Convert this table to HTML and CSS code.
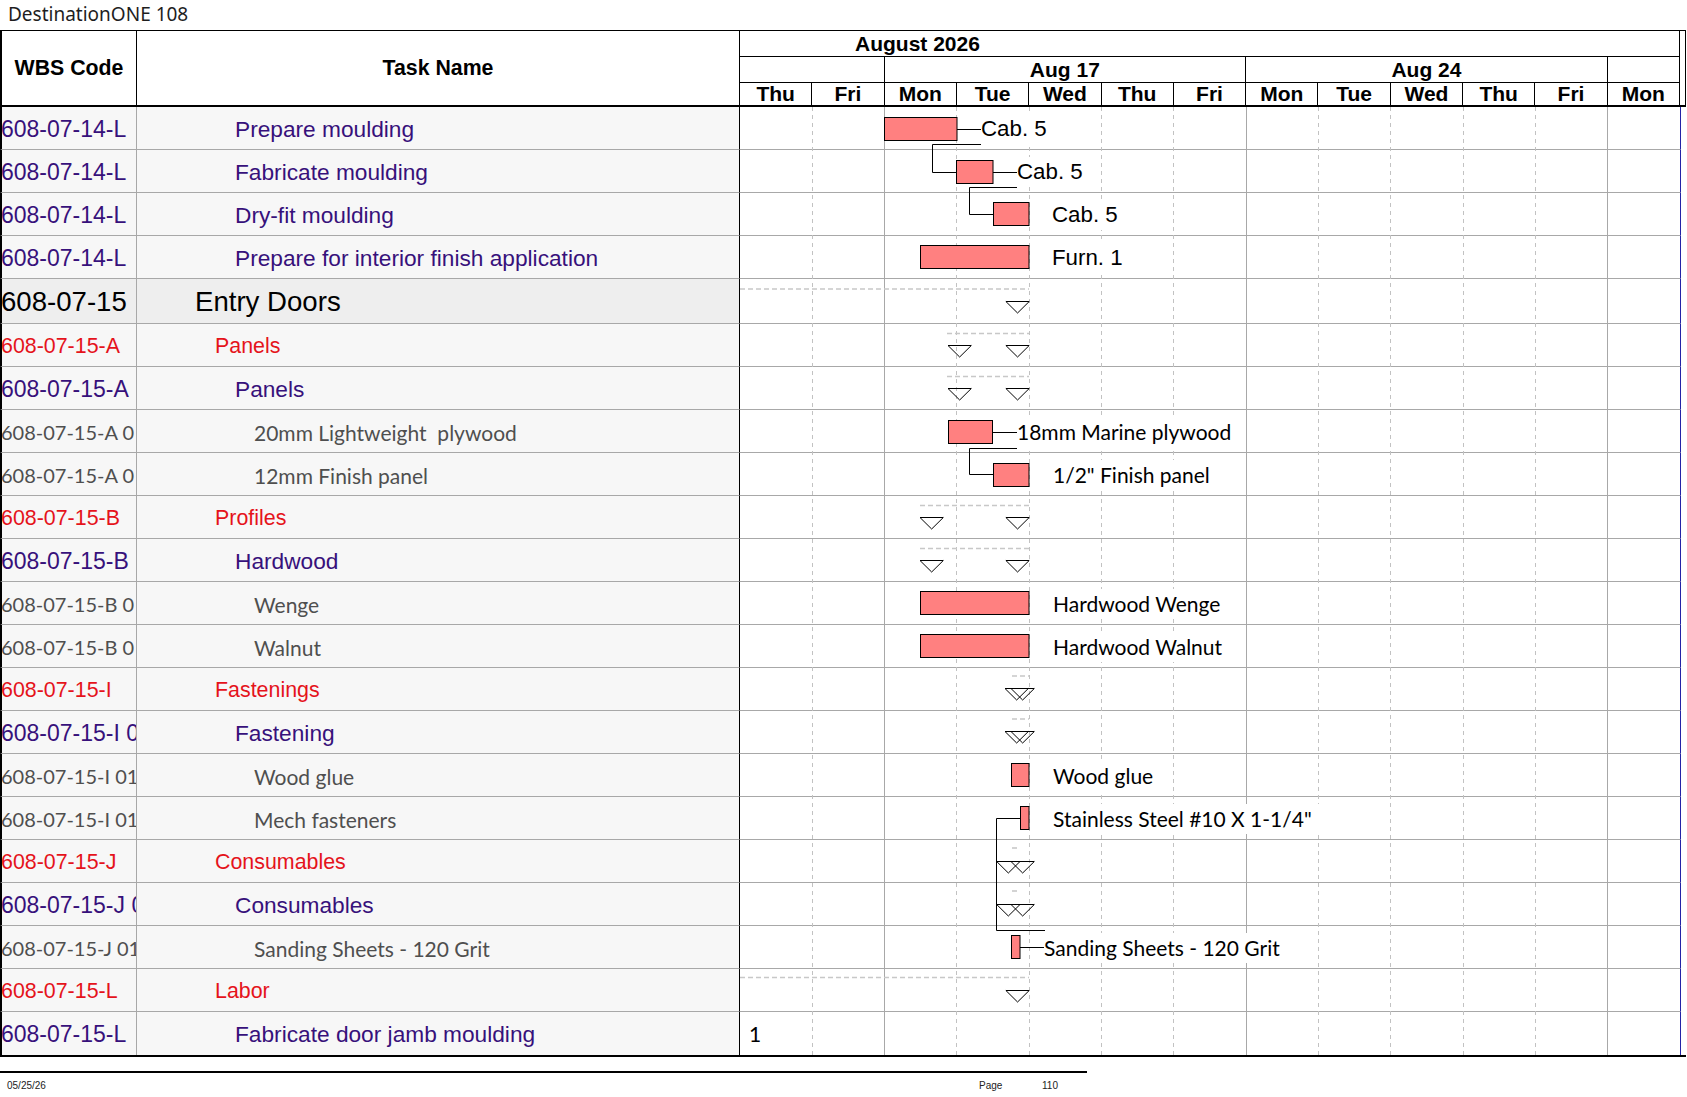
FILE: index.html
```html
<!DOCTYPE html>
<html lang="en">
<head>
<meta charset="utf-8">
<title>DestinationONE 108</title>
<link rel="stylesheet" href="styles.css">
</head>
<body>
<div class="doc-title">DestinationONE 108</div>
<div class="sheet">
  <div class="head">
    <div class="h-wbs">WBS Code</div>
    <div class="h-task">Task Name</div>
    <div class="h-scale">
      <div class="t-month"><span>August 2026</span></div>
      <div class="t-week"><div></div><div>Aug 17</div><div>Aug 24</div><div></div></div>
      <div class="t-day">
        <div>Thu</div><div>Fri</div><div>Mon</div><div>Tue</div><div>Wed</div><div>Thu</div><div>Fri</div>
        <div>Mon</div><div>Tue</div><div>Wed</div><div>Thu</div><div>Fri</div><div>Mon</div>
      </div>
    </div>
    <div class="h-extra"></div>
  </div>

  <div class="body">
    <div class="row p"><div class="c-wbs"><span>608-07-14-L</span></div><div class="c-task">Prepare moulding</div><div class="c-chart"></div></div>
    <div class="row p"><div class="c-wbs"><span>608-07-14-L</span></div><div class="c-task">Fabricate moulding</div><div class="c-chart"></div></div>
    <div class="row p"><div class="c-wbs"><span>608-07-14-L</span></div><div class="c-task">Dry-fit moulding</div><div class="c-chart"></div></div>
    <div class="row p"><div class="c-wbs"><span>608-07-14-L</span></div><div class="c-task">Prepare for interior finish application</div><div class="c-chart"></div></div>
    <div class="row e"><div class="c-wbs"><span>608-07-15</span></div><div class="c-task">Entry Doors</div><div class="c-chart"></div></div>
    <div class="row r"><div class="c-wbs"><span>608-07-15-A</span></div><div class="c-task">Panels</div><div class="c-chart"></div></div>
    <div class="row p"><div class="c-wbs"><span>608-07-15-A</span></div><div class="c-task">Panels</div><div class="c-chart"></div></div>
    <div class="row g"><div class="c-wbs"><span>608-07-15-A 0</span></div><div class="c-task">20mm Lightweight  plywood</div><div class="c-chart"></div></div>
    <div class="row g"><div class="c-wbs"><span>608-07-15-A 0</span></div><div class="c-task">12mm Finish panel</div><div class="c-chart"></div></div>
    <div class="row r"><div class="c-wbs"><span>608-07-15-B</span></div><div class="c-task">Profiles</div><div class="c-chart"></div></div>
    <div class="row p"><div class="c-wbs"><span>608-07-15-B</span></div><div class="c-task">Hardwood</div><div class="c-chart"></div></div>
    <div class="row g"><div class="c-wbs"><span>608-07-15-B 0</span></div><div class="c-task">Wenge</div><div class="c-chart"></div></div>
    <div class="row g"><div class="c-wbs"><span>608-07-15-B 0</span></div><div class="c-task">Walnut</div><div class="c-chart"></div></div>
    <div class="row r"><div class="c-wbs"><span>608-07-15-I</span></div><div class="c-task">Fastenings</div><div class="c-chart"></div></div>
    <div class="row p"><div class="c-wbs"><span>608-07-15-I 0</span></div><div class="c-task">Fastening</div><div class="c-chart"></div></div>
    <div class="row g"><div class="c-wbs"><span>608-07-15-I 01</span></div><div class="c-task">Wood glue</div><div class="c-chart"></div></div>
    <div class="row g"><div class="c-wbs"><span>608-07-15-I 01</span></div><div class="c-task">Mech fasteners</div><div class="c-chart"></div></div>
    <div class="row r"><div class="c-wbs"><span>608-07-15-J</span></div><div class="c-task">Consumables</div><div class="c-chart"></div></div>
    <div class="row p"><div class="c-wbs"><span>608-07-15-J 0</span></div><div class="c-task">Consumables</div><div class="c-chart"></div></div>
    <div class="row g"><div class="c-wbs"><span>608-07-15-J 01</span></div><div class="c-task">Sanding Sheets - 120 Grit</div><div class="c-chart"></div></div>
    <div class="row r"><div class="c-wbs"><span>608-07-15-L</span></div><div class="c-task">Labor</div><div class="c-chart"></div></div>
    <div class="row p last"><div class="c-wbs"><span>608-07-15-L</span></div><div class="c-task">Fabricate door jamb moulding</div><div class="c-chart"></div></div>

    <div class="gantt">
      <svg class="gantt-svg" width="940" height="948" viewBox="0 0 940 948">
        <g class="grid-dash">
          <line x1="72.5" y1="0" x2="72.5" y2="948"/>
          <line x1="216.5" y1="0" x2="216.5" y2="948"/>
          <line x1="289.5" y1="0" x2="289.5" y2="948"/>
          <line x1="361.5" y1="0" x2="361.5" y2="948"/>
          <line x1="433.5" y1="0" x2="433.5" y2="948"/>
          <line x1="578.5" y1="0" x2="578.5" y2="948"/>
          <line x1="650.5" y1="0" x2="650.5" y2="948"/>
          <line x1="723.5" y1="0" x2="723.5" y2="948"/>
          <line x1="795.5" y1="0" x2="795.5" y2="948"/>
        </g>
        <g class="grid-week">
          <line x1="144.5" y1="0" x2="144.5" y2="948"/>
          <line x1="506.5" y1="0" x2="506.5" y2="948"/>
          <line x1="867.5" y1="0" x2="867.5" y2="948"/>
        </g>
        <g class="sum-dash">
          <path d="M0 182 H289"/>
          <path d="M207 226.5 H289"/>
          <path d="M207 269.5 H289"/>
          <path d="M180 398.5 H289"/>
          <path d="M180 441.5 H289"/>
          <path d="M272 569 H289"/>
          <path d="M272 612 H289"/>
          <path d="M272 741 H279"/>
          <path d="M272 784 H279"/>
          <path d="M0 870.5 H289"/>
        </g>
        <g class="links">
          <path d="M217 22.5 H241"/>
          <path d="M241 37.5 H192.5 V65.5 H216.5"/>
          <path d="M253 65.5 H277"/>
          <path d="M277 80.5 H229.5 V107.5 H253.5"/>
          <path d="M252.5 325.5 H277"/>
          <path d="M277 341.5 H229.5 V367.5 H253.5"/>
          <path d="M280.5 711.5 H256.5 V823.5 H305"/>
          <path d="M280 840.5 H305"/>
        </g>
        <g class="bars">
          <rect x="144.5" y="10.5" width="72.5" height="23"/>
          <rect x="216.5" y="53.5" width="36.5" height="23"/>
          <rect x="253.5" y="95.5" width="35.5" height="23"/>
          <rect x="180.5" y="138.5" width="108.5" height="23"/>
          <rect x="208.5" y="313.5" width="44" height="23"/>
          <rect x="253.5" y="356.5" width="35.5" height="23"/>
          <rect x="180.5" y="484.5" width="108.5" height="23"/>
          <rect x="180.5" y="527.5" width="108.5" height="23"/>
          <rect x="271.5" y="656.5" width="17.5" height="23"/>
          <rect x="280.5" y="699.5" width="8.5" height="23"/>
          <rect x="271.5" y="828.5" width="8.5" height="23"/>
        </g>
        <g class="tris">
          <polygon points="265.9,194.5 289.2,194.5 277.55,206"/>
          <polygon points="208,238.5 231.3,238.5 219.65,250"/>
          <polygon points="265.9,238.5 289.2,238.5 277.55,250"/>
          <polygon points="208,281.5 231.3,281.5 219.65,293"/>
          <polygon points="265.9,281.5 289.2,281.5 277.55,293"/>
          <polygon points="180,410.5 203.3,410.5 191.65,422"/>
          <polygon points="265.9,410.5 289.2,410.5 277.55,422"/>
          <polygon points="180,453.5 203.3,453.5 191.65,465"/>
          <polygon points="265.9,453.5 289.2,453.5 277.55,465"/>
          <polygon points="265,581.5 288.3,581.5 276.65,593"/>
          <polygon points="271,581.5 294.3,581.5 282.65,593"/>
          <polygon points="265,624.5 288.3,624.5 276.65,636"/>
          <polygon points="271,624.5 294.3,624.5 282.65,636"/>
          <polygon points="256.7,754.5 280,754.5 268.35,766"/>
          <polygon points="271,754.5 294.3,754.5 282.65,766"/>
          <polygon points="256.7,797.5 280,797.5 268.35,809"/>
          <polygon points="271,797.5 294.3,797.5 282.65,809"/>
          <polygon points="265.9,883.5 289.2,883.5 277.55,895"/>
        </g>
      </svg>
      <span class="lbl ar" style="left:241px;top:7px">Cab. 5</span>
      <span class="lbl ar" style="left:277px;top:50px">Cab. 5</span>
      <span class="lbl ar" style="left:312px;top:93px">Cab. 5</span>
      <span class="lbl ar" style="left:312px;top:136px">Furn. 1</span>
      <span class="lbl ca" style="left:277px;top:310px">18mm Marine plywood</span>
      <span class="lbl ca" style="left:313px;top:353px">1/2" Finish panel</span>
      <span class="lbl ca" style="left:313px;top:482px">Hardwood Wenge</span>
      <span class="lbl ca" style="left:313px;top:525px">Hardwood Walnut</span>
      <span class="lbl ca" style="left:313px;top:654px">Wood glue</span>
      <span class="lbl ca" style="left:313px;top:697px">Stainless Steel #10 X 1-1/4"</span>
      <span class="lbl ca" style="left:304px;top:826px">Sanding Sheets - 120 Grit</span>
      <span class="lbl ca" style="left:9px;top:912px">1</span>
    </div>
  </div>
</div>
<div class="footer"><span class="f-date">05/25/26</span><span class="f-page">Page</span><span class="f-num">110</span></div>
</body>
</html>
```

FILE: styles.css
```css
* { box-sizing: border-box; }

body {
  margin: 0;
  width: 1687px;
  background: #fff;
  color: #000;
  font-family: "Liberation Sans", Arial, sans-serif;
}

.doc-title {
  height: 30px;
  padding-left: 8px;
  font-family: "Noto Sans", sans-serif;
  font-size: 19px;
  line-height: 28px;
  color: #1e1e1e;
}

.sheet { width: 1686px; }

/* ---------- header ---------- */
.head {
  display: flex;
  height: 77px;
  border-top: 1px solid #000;
  border-bottom: 2px solid #000;
  font-weight: bold;
  font-size: 21px;
}

.h-wbs {
  width: 137px;
  border-left: 2px solid #000;
  border-right: 1px solid #000;
  display: flex;
  align-items: center;
  justify-content: center;
  font-size: 21.3px;
}

.h-task {
  width: 603px;
  border-right: 1px solid #000;
  display: flex;
  align-items: center;
  justify-content: center;
  font-size: 21.3px;
}

.h-scale {
  width: 940px;
  display: flex;
  flex-direction: column;
}

.h-extra {
  width: 6px;
  border-right: 1px solid #000;
}

.t-month {
  height: 26px;
  border-bottom: 1px solid #000;
  border-right: 1px solid #000;
  padding-left: 115px;
  line-height: 25px;
}

.t-week {
  height: 26px;
  border-bottom: 1px solid #000;
  display: grid;
  grid-template-columns: 2fr 5fr 5fr 1fr;
}

.t-week > div {
  border-right: 1px solid #000;
  text-align: center;
  line-height: 25px;
}

.t-day {
  flex: 1;
  display: grid;
  grid-template-columns: repeat(13, 1fr);
}

.t-day > div {
  border-right: 1px solid #000;
  text-align: center;
  line-height: 22px;
}

/* ---------- body rows ---------- */
.body {
  position: relative;
  width: 1686px;
  border-bottom: 2px solid #000;
}

.row {
  display: flex;
  height: 43px;
}

.row.e { height: 45px; }

.c-wbs,
.c-task,
.c-chart {
  border-bottom: 1px solid #a8a8a8;
}

.row.last .c-wbs,
.row.last .c-task,
.row.last .c-chart { border-bottom: none; }

.c-wbs {
  width: 137px;
  border-left: 2px solid #000;
  border-right: 1px solid #a8a8a8;
  background: #f7f7f7;
  overflow: hidden;
  white-space: nowrap;
  display: flex;
  align-items: center;
  padding-top: 2px;
}

.c-wbs span { margin-left: -1px; }

.c-task {
  width: 603px;
  border-right: 1px solid #000;
  background: #f7f7f7;
  white-space: pre;
  display: flex;
  align-items: center;
  padding-top: 2px;
}

.c-chart {
  width: 941px;
  border-right: 1px solid #2323a6;
  background: #fff;
}

/* purple task level */
.row.p .c-wbs,
.row.p .c-task {
  color: #37117b;
  font-size: 22.7px;
}
.row.p .c-wbs { font-size: 23px; }
.row.p .c-task { padding-left: 98px; }

/* red summary level */
.row.r .c-wbs,
.row.r .c-task {
  color: #e5131b;
  font-size: 21.4px;
}
.row.r .c-task { padding-left: 78px; }

/* grey resource level */
.row.g .c-wbs,
.row.g .c-task {
  color: #4f4f4f;
  font-family: Lato, "Open Sans", sans-serif;
  font-size: 21px;
}
.row.g .c-wbs { font-size: 20px; }
.row.g .c-task { padding-left: 117px; }

/* top summary */
.row.e .c-wbs,
.row.e .c-task {
  color: #000;
  font-size: 27.6px;
  background: #eeeeee;
}
.row.e .c-task { padding-left: 58px; }

/* ---------- gantt overlay ---------- */
.gantt {
  position: absolute;
  left: 740px;
  top: 0;
  width: 940px;
  height: 948px;
  pointer-events: none;
}

.gantt-svg {
  position: absolute;
  left: 0;
  top: 0;
  display: block;
}

.grid-dash line {
  stroke: #c2c2c2;
  stroke-width: 1;
  stroke-dasharray: 4 4;
}

.grid-week line {
  stroke: #a8a8a8;
  stroke-width: 1;
}

.sum-dash path {
  stroke: #c8c8c8;
  stroke-width: 1.6;
  stroke-dasharray: 5 3;
  fill: none;
}

.links path {
  stroke: #000;
  stroke-width: 1;
  fill: none;
}

.bars rect {
  fill: #ff8080;
  stroke: #000;
  stroke-width: 1;
}

.tris polygon {
  fill: none;
  stroke: #000;
  stroke-width: 1;
}

.lbl {
  position: absolute;
  height: 30px;
  line-height: 30px;
  background: #fff;
  padding-right: 12px;
  white-space: pre;
  color: #000;
}

.lbl.ar {
  font-family: "Liberation Sans", Arial, sans-serif;
  font-size: 22.3px;
}

.lbl.ca {
  font-family: Lato, "Open Sans", sans-serif;
  font-size: 21px;
}

/* ---------- footer ---------- */
.footer {
  width: 1087px;
  margin-top: 14px;
  border-top: 2px solid #000;
  padding-top: 7px;
  display: flex;
  font-family: "Liberation Sans", Arial, sans-serif;
  font-size: 10px;
  line-height: 11px;
  color: #222;
}

.f-date { flex: 1; padding-left: 7px; }
.f-page { width: 63px; }
.f-num { width: 45px; }
```
